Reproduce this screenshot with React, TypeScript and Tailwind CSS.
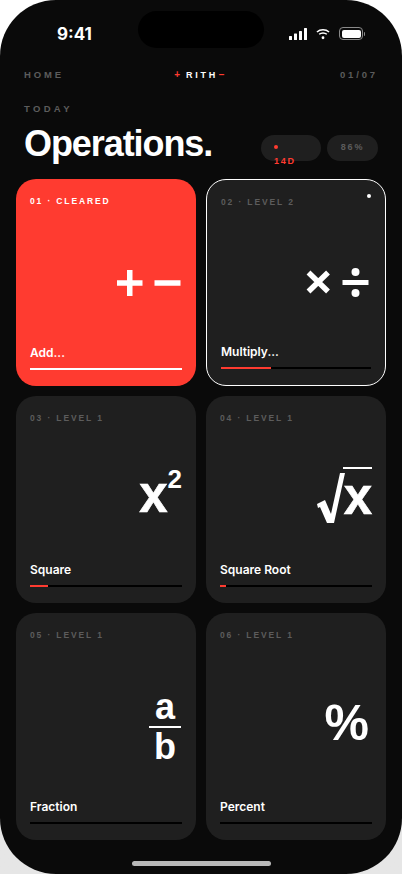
const sans = "font-['Inter','Liberation_Sans',Arial,sans-serif]";
const helv = "font-['Liberation_Sans',Arial,sans-serif]";
const red = "text-[#ff3b30]";

function Signal() {
  return (
    <svg width="18" height="12" viewBox="0 0 18 12" fill="white">
      <rect x="0" y="8" width="3" height="4" rx="0.5" />
      <rect x="5" y="5.5" width="3" height="6.5" rx="0.5" />
      <rect x="10" y="3" width="3" height="9" rx="0.5" />
      <rect x="15" y="0" width="3" height="12" rx="0.5" />
    </svg>
  );
}

function Wifi() {
  return (
    <svg width="14" height="12" viewBox="0 0 15 12" fill="none" stroke="white" strokeWidth="1.6">
      <path d="M1 3.8C4.6 .6 10.4 .6 14 3.8" />
      <path d="M3.4 6.3C5.6 4.4 9.4 4.4 11.6 6.3" />
      <circle cx="7.5" cy="10" r="1.5" fill="white" stroke="none" />
    </svg>
  );
}

function Battery() {
  return (
    <div className="flex items-center gap-[1px]">
      <div className="h-[13px] w-[24px] rounded-[4px] border border-[#8a8a8a] p-[1.5px]">
        <div className="h-full w-full rounded-[2px] bg-white" />
      </div>
      <div className="h-[4px] w-[1px] rounded-r bg-[#8a8a8a]" />
    </div>
  );
}

function PlusMinus() {
  return (
    <svg className="mr-[1px]" width="64" height="26" viewBox="0 0 64 26" fill="white">
      <rect x="0" y="10.25" width="25.5" height="5.5" />
      <rect x="10" y="0" width="5.5" height="26" />
      <rect x="37.5" y="10.25" width="26" height="5.5" />
    </svg>
  );
}

function TimesDivide() {
  return (
    <svg className="mr-[2px]" width="63" height="30" viewBox="0 0 63 30" fill="white">
      <path d="M2.5 4.5 L22 23.5 M22 4.5 L2.5 23.5" stroke="white" strokeWidth="5.5" fill="none" />
      <rect x="36.5" y="12" width="26" height="5" />
      <circle cx="49.5" cy="4" r="4" />
      <circle cx="49.5" cy="25" r="4" />
    </svg>
  );
}

function Square() {
  return (
    <div className={`mb-[8px] flex items-start font-bold text-white ${helv}`}>
      <span className="mt-[-3px] text-[51px] leading-[50px] [-webkit-text-stroke:0.6px_white]">x</span>
      <span className="mt-[-7px] text-[26px] leading-[26px]">2</span>
    </div>
  );
}

function Root() {
  return (
    <div className={`mb-[10px] flex items-start font-bold text-white ${helv}`}>
      <svg className="mt-[6px]" width="28" height="50" viewBox="0 0 28 50" fill="white">
        <path d="M0 31 L8 27 L14 41 L23 0 L28 0 L17 50 L10 50 L3 34 L1 35 Z" />
      </svg>
      <div className="ml-[-2px] flex w-[29px] flex-col items-end">
        <span className="h-[2px] w-full bg-white" />
        <span className="mt-[6px] text-[51px] leading-[44px] [-webkit-text-stroke:0.6px_white]">x</span>
      </div>
    </div>
  );
}

function Fraction() {
  return (
    <div className={`mr-[1px] flex w-[32px] flex-col items-center font-bold text-white ${helv}`}>
      <span className="text-[36px] leading-[34px]">a</span>
      <span className="my-[2px] h-[2px] w-full bg-white" />
      <span className="text-[36px] leading-[34px]">b</span>
    </div>
  );
}

function Percent() {
  return <span className={`mr-[3px] mb-[8px] text-[50px] leading-none font-bold text-white ${helv}`}>%</span>;
}

type CardProps = {
  label: string;
  title: string;
  glyph: React.ReactNode;
  progress: number;
  cleared?: boolean;
  active?: boolean;
};

function Card({ label, title, glyph, progress, cleared, active }: CardProps) {
  return (
    <div
      className={`relative flex flex-col rounded-[20px] px-[14px] pt-[16px] pb-[16px] ${
        cleared ? "bg-[#ff3b30]" : "bg-[#1f1f1f]"
      } ${active ? "border border-white" : ""}`}
    >
      {active && <div className="absolute top-[14px] right-[14px] h-[4px] w-[4px] rounded-full bg-white" />}
      <div className={`text-[8.5px] leading-[12px] font-bold tracking-[0.22em] ${helv} ${cleared ? "text-white" : "text-[#5c5c5c]"}`}>
        {label}
      </div>
      <div className="flex flex-1 items-center justify-end pt-[14px]">{glyph}</div>
      <div className="text-[12px] leading-[16px] font-semibold text-white">{title}</div>
      <div className={`mt-[7px] h-[2px] w-full ${cleared ? "bg-white" : "bg-black"}`}>
        <div className="h-full bg-[#ff3b30]" style={{ width: `${cleared ? 0 : progress}%` }} />
      </div>
    </div>
  );
}

export default function App() {
  return (
    <div className={`h-[874px] w-[402px] overflow-hidden bg-gradient-to-b from-white from-50% to-[#e6e6e6] to-50% ${sans}`}>
      <div className="relative flex h-full flex-col rounded-[56px] bg-[#0a0a0a]">
        <div className="absolute top-[11px] left-[138px] h-[37px] w-[126px] rounded-full bg-black" />

        <div className="flex h-[45px] items-end justify-between pr-[37px] pl-[57px]">
          <span className="text-[17px] leading-[22px] font-bold text-white">9:41</span>
          <div className="mb-[5px] flex items-center gap-[9px]">
            <Signal />
            <Wifi />
            <Battery />
          </div>
        </div>

        <div className={`mt-[24px] flex items-center justify-between px-6 text-[9.5px] leading-[12px] font-bold ${helv}`}>
          <span className="tracking-[0.3em] text-[#5c5c5c]">HOME</span>
          <span className="mr-[5px] flex items-center text-[9px] text-white">
            <span className={`mr-[6px] text-[10px] ${red}`}>+</span>
            <span className="tracking-[0.3em]">RITH</span>
            <span className={`ml-[1px] text-[10px] ${red}`}>−</span>
          </span>
          <span className="tracking-[0.3em] text-[#5c5c5c]">01/07</span>
        </div>

        <div className={`mt-[22px] px-6 text-[9.5px] leading-[12px] font-bold tracking-[0.35em] text-[#5c5c5c] ${helv}`}>TODAY</div>

        <div className={`mt-[7px] flex items-end justify-between pr-6 pl-6 ${helv}`}>
          <h1 className="text-[36px] leading-[44px] font-bold tracking-[-0.03em] text-white">Operations.</h1>
          <div className="mb-[5px] flex gap-[6px]">
            <div className={`flex h-[26px] w-[60px] flex-col items-start rounded-[13px] bg-[#1f1f1f] pt-[10px] pl-[13px] text-[9px] leading-[12px] font-bold tracking-[0.2em] ${red}`}>
              <span className="h-[4px] w-[4px] shrink-0 rounded-full bg-[#ff3b30]" />
              <span className="mt-[6px] shrink-0">14D</span>
            </div>
            <div className="flex h-[26px] w-[51px] items-center justify-center rounded-[13px] bg-[#1f1f1f] text-[9px] font-bold tracking-[0.2em] text-[#5c5c5c]">
              86%
            </div>
          </div>
        </div>

        <div className="mt-[13px] grid grid-cols-2 grid-rows-[207px_207px_227px] gap-[10px] px-4">
          <Card label="01 · CLEARED" title="Add..." glyph={<PlusMinus />} progress={100} cleared />
          <Card label="02 · LEVEL 2" title="Multiply..." glyph={<TimesDivide />} progress={33} active />
          <Card label="03 · LEVEL 1" title="Square" glyph={<Square />} progress={12} />
          <Card label="04 · LEVEL 1" title="Square Root" glyph={<Root />} progress={4} />
          <Card label="05 · LEVEL 1" title="Fraction" glyph={<Fraction />} progress={0} />
          <Card label="06 · LEVEL 1" title="Percent" glyph={<Percent />} progress={0} />
        </div>

        <div className="absolute bottom-[8px] left-[132px] h-[5px] w-[139px] rounded-full bg-[#b8b8b8]" />
      </div>
    </div>
  );
}
